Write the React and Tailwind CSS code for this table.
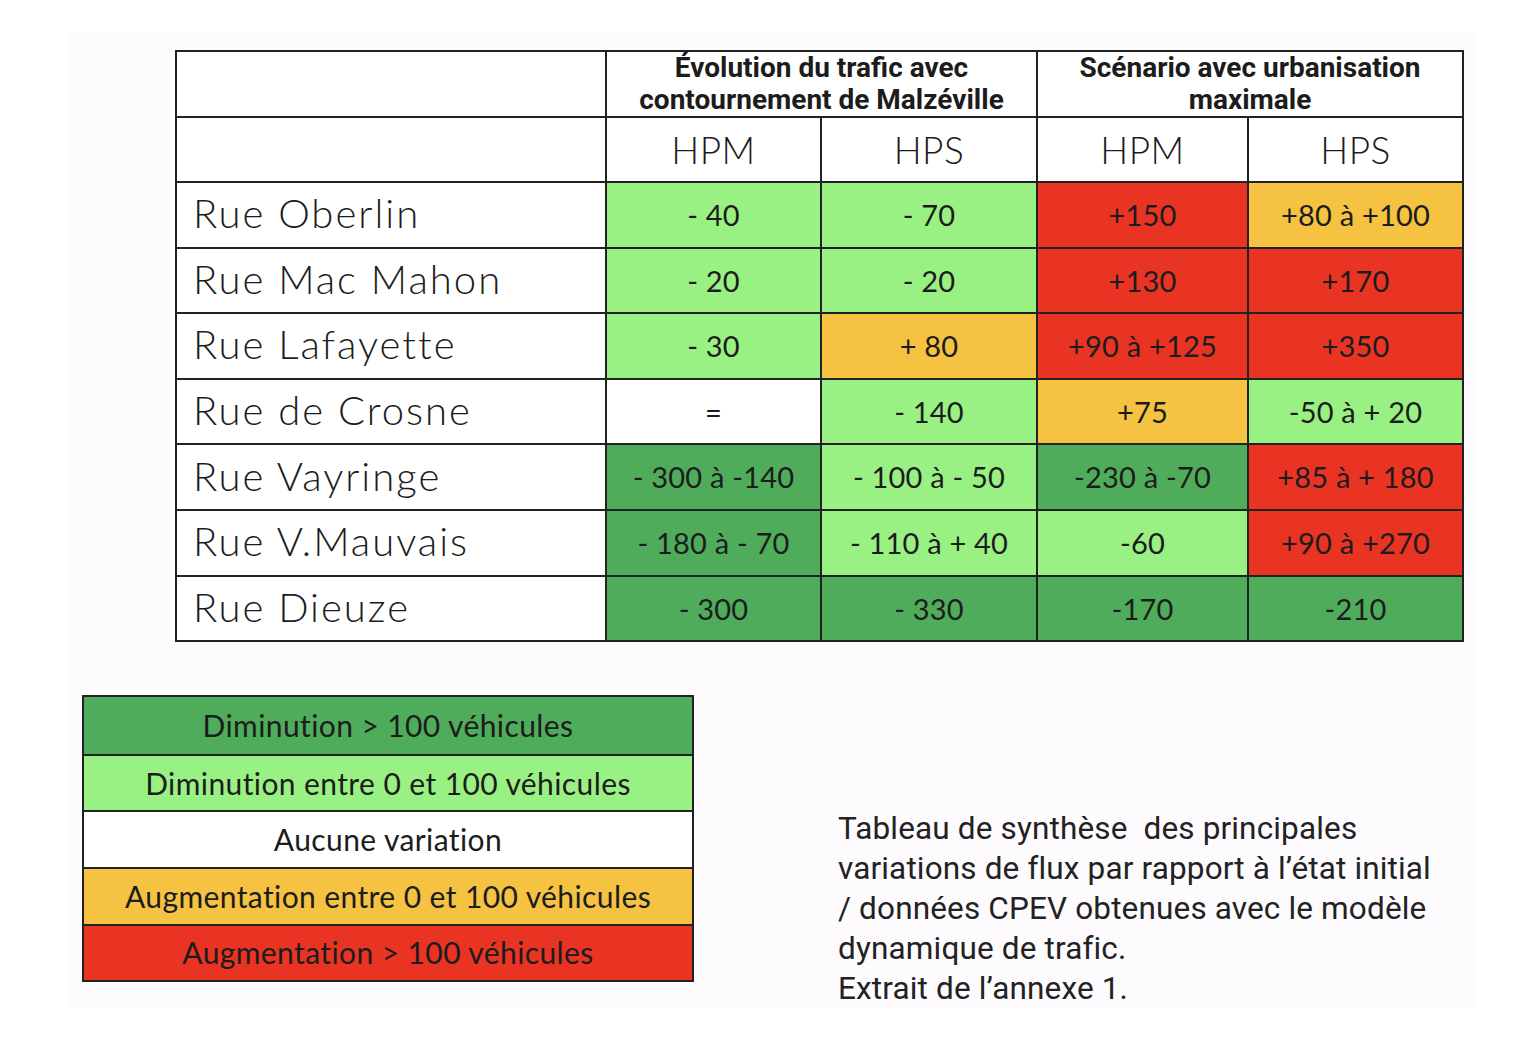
import React from 'react';

// Colour keys for the traffic variations
const C = {
  dg: 'bg-[#4fac5b]',
  lg: 'bg-[#99f183]',
  w: 'bg-white',
  y: 'bg-[#f5c242]',
  r: 'bg-[#e93424]',
};

const rows = [
  ['Rue Oberlin', [['- 40', 'lg'], ['- 70', 'lg'], ['+150', 'r'], ['+80 à +100', 'y']]],
  ['Rue Mac Mahon', [['- 20', 'lg'], ['- 20', 'lg'], ['+130', 'r'], ['+170', 'r']]],
  ['Rue Lafayette', [['- 30', 'lg'], ['+ 80', 'y'], ['+90 à +125', 'r'], ['+350', 'r']]],
  ['Rue de Crosne', [['=', 'w'], ['- 140', 'lg'], ['+75', 'y'], ['-50 à + 20', 'lg']]],
  ['Rue Vayringe', [['- 300 à -140', 'dg'], ['- 100 à - 50', 'lg'], ['-230 à -70', 'dg'], ['+85 à + 180', 'r']]],
  ['Rue V.Mauvais', [['- 180 à - 70', 'dg'], ['- 110 à + 40', 'lg'], ['-60', 'lg'], ['+90 à +270', 'r']]],
  ['Rue Dieuze', [['- 300', 'dg'], ['- 330', 'dg'], ['-170', 'dg'], ['-210', 'dg']]],
];

const legend = [
  ['Diminution > 100 véhicules', 'dg'],
  ['Diminution entre 0 et 100 véhicules', 'lg'],
  ['Aucune variation', 'w'],
  ['Augmentation entre 0 et 100 véhicules', 'y'],
  ['Augmentation > 100 véhicules', 'r'],
];

const bold = { fontFamily: 'Roboto, "Noto Sans", sans-serif' };
const thin = { fontFamily: 'Lato, "DejaVu Sans", sans-serif' };

const App = () => {
  return (
    <div className="w-[1526px] h-[1060px] bg-white pt-[32px] pl-[68px] text-[#1c1c1c]">
      <div className="w-[1406px] h-[975px] bg-[#fdfbfd] pt-[18px]">
        {/* Main table */}
        <table className="ml-[107px] border-collapse table-fixed w-[1289px]" style={thin}>
          <colgroup>
            <col className="w-[430px]" />
            <col className="w-[215px]" />
            <col className="w-[216px]" />
            <col className="w-[211px]" />
            <col className="w-[215px]" />
          </colgroup>
          <thead>
            <tr className="h-[66px] bg-white">
              <th className="border-2 border-[#222]"></th>
              <th colSpan={2} className="border-2 border-[#222] font-bold text-[28px] leading-[32px]" style={bold}>
                Évolution du trafic avec<br />contournement de Malzéville
              </th>
              <th colSpan={2} className="border-2 border-[#222] font-bold text-[28px] leading-[32px]" style={bold}>
                Scénario avec urbanisation<br />maximale
              </th>
            </tr>
            <tr className="h-[65px] bg-white">
              <th className="border-2 border-[#222] font-light text-[37px]"></th>
              {['HPM', 'HPS', 'HPM', 'HPS'].map((h, i) => (
                <th key={i} className="border-2 border-[#222] font-light text-[37px] tracking-[0.5px]">{h}</th>
              ))}
            </tr>
          </thead>
          <tbody>
            {rows.map(([name, cells]) => (
              <tr key={name} className="h-[65.6px]">
                <td className="border-2 border-[#222] bg-white pl-[16px] pb-[3px] text-[40px] font-light tracking-[2px]">{name}</td>
                {cells.map(([v, c], i) => (
                  <td key={i} className={`border-2 border-[#222] text-center text-[29px] font-normal tracking-[0.2px] ${C[c]}`}>{v}</td>
                ))}
              </tr>
            ))}
          </tbody>
        </table>

        {/* Legend and caption */}
        <div className="flex items-start mt-[53px] ml-[14px]">
          <div className="w-[612px] border-2 border-[#222] flex flex-col" style={thin}>
            {legend.map(([t, c], i) => (
              <div
                key={t}
                className={`h-[56.6px] flex items-center justify-center text-[30px] font-normal tracking-[0.4px] ${C[c]} ${i > 0 ? 'border-t-2 border-[#222]' : ''}`}
              >
                {t}
              </div>
            ))}
          </div>
          <div className="ml-[144px] mt-[114px] text-[31.5px] leading-[40px] tracking-[0.15px] text-[#222]" style={bold}>
            <p>Tableau de synthèse &nbsp;des principales</p>
            <p>variations de flux par rapport à l’état initial</p>
            <p>/ données CPEV obtenues avec le modèle</p>
            <p>dynamique de trafic.</p>
            <p>Extrait de l’annexe 1.</p>
          </div>
        </div>
      </div>
    </div>
  );
};

export default App;
